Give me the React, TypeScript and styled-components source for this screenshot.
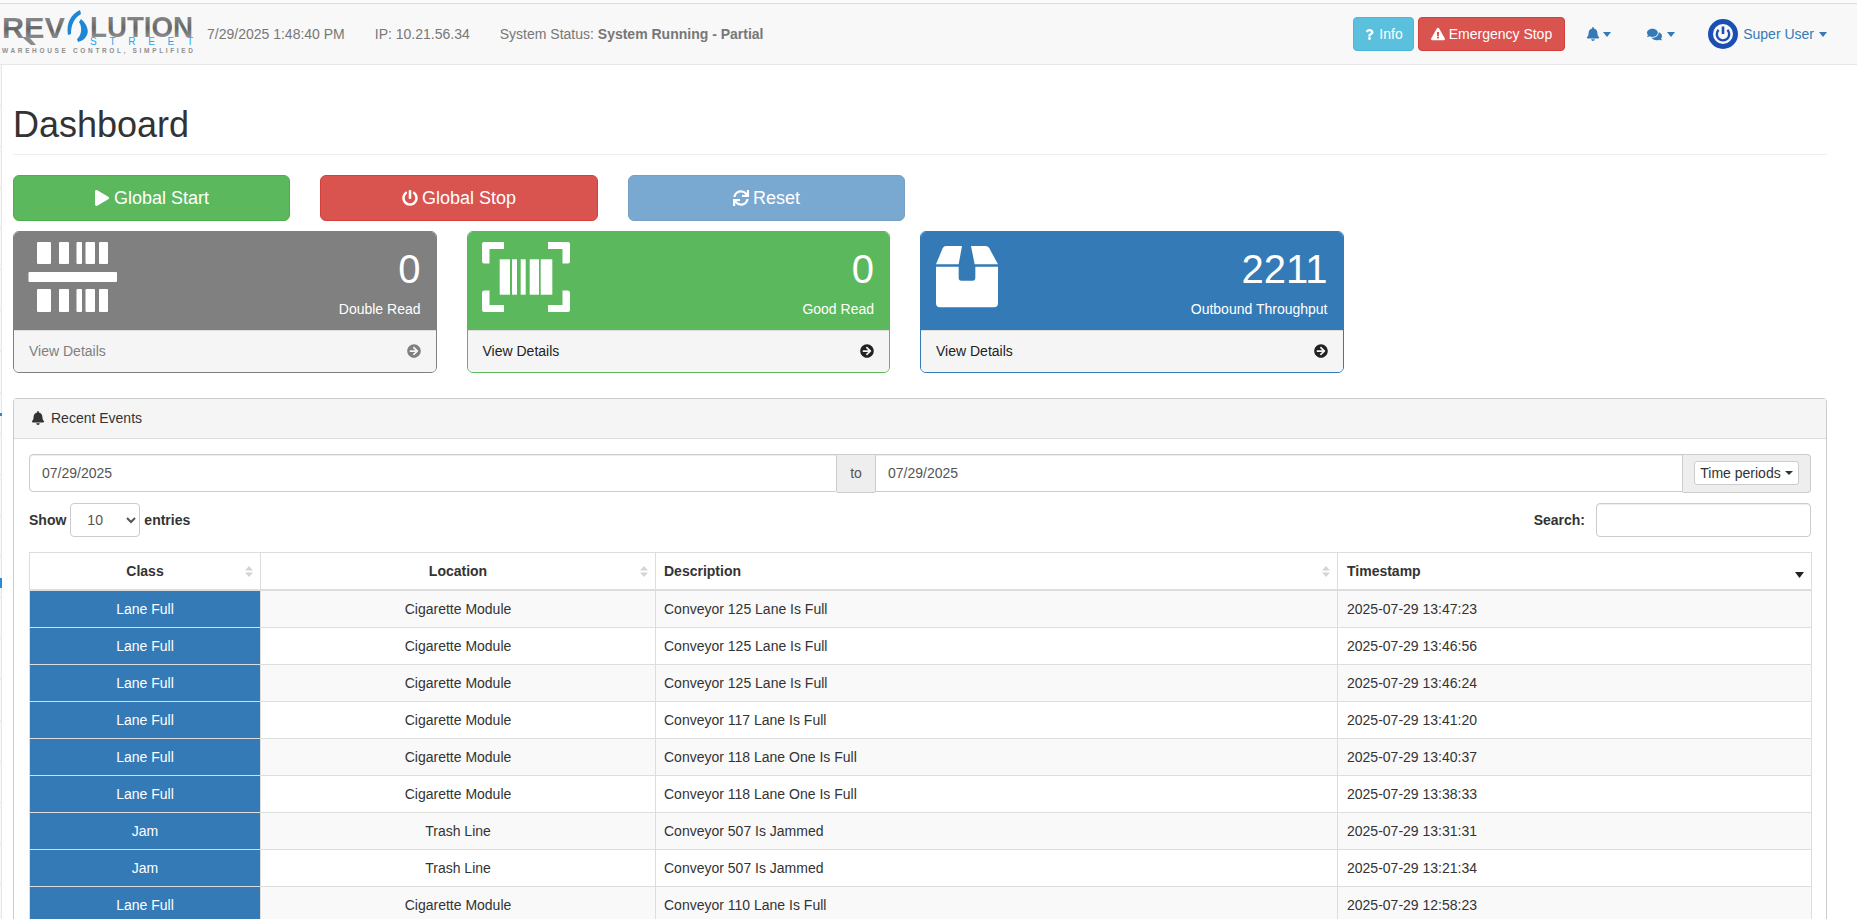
import React from 'react';
import styled, { createGlobalStyle } from 'styled-components';
import {
    FaArrowCircleRight,
    FaBell,
    FaComments,
    FaExclamationTriangle,
    FaPlay,
    FaPowerOff,
    FaQuestion,
    FaSync,
} from 'react-icons/fa';

const GlobalStyle = createGlobalStyle`
    html, body {
        margin: 0;
        padding: 0;
        height: 100%;
        overflow: hidden;
        background: #fff;
    }
    body {
        font-family: "Liberation Sans", Arial, sans-serif;
        font-size: 14px;
        line-height: 20px;
        color: #333;
    }
    * {
        box-sizing: border-box;
    }
`;

const Page = styled.div`
    padding-top: 3px;
    background: #fbfbfb;
`;

const Navbar = styled.nav`
    height: 62px;
    display: flex;
    align-items: center;
    padding-right: 30px;
    background: #f8f8f8;
    border-top: 1px solid #ddd;
    border-bottom: 1px solid #e7e7e7;
    color: #777;
`;

const LogoSvg = styled.svg`
    width: 195px;
    height: 46px;
    margin: 0 12px 4px 0;
    flex-shrink: 0;
    overflow: visible;
`;

const NavText = styled.span`
    margin-right: 30px;
    white-space: nowrap;
`;

const NavRight = styled.div`
    margin-left: auto;
    display: flex;
    align-items: center;
`;

const SmallButton = styled.button<{ $bg: string; $border: string; $pad: number }>`
    height: 34px;
    padding: 0 ${(p) => p.$pad}px;
    margin-right: 4px;
    display: inline-flex;
    align-items: center;
    gap: 4px;
    font: inherit;
    color: #fff;
    background: ${(p) => p.$bg};
    border: 1px solid ${(p) => p.$border};
    border-radius: 4px;
`;

const NavIcon = styled.a<{ $left: number; $gap: number }>`
    display: inline-flex;
    align-items: center;
    gap: ${(p) => p.$gap}px;
    margin-left: ${(p) => p.$left}px;
    color: #337ab7;
`;

const Caret = styled.span`
    display: inline-block;
    width: 0;
    height: 0;
    border-top: 4px solid currentColor;
    border-left: 4px solid transparent;
    border-right: 4px solid transparent;
`;

const NavCaret = styled(Caret)`
    border-top-width: 5px;
    border-left-width: 4.5px;
    border-right-width: 4.5px;
`;

const UserName = styled.span`
    margin: 0 2px;
`;

const Shell = styled.div`
    display: flex;
    background: #fff;
`;

const SideStrip = styled.div`
    position: relative;
    width: 2px;
    height: 860px;
    flex-shrink: 0;
    background: repeating-linear-gradient(#f8f8f8 0 40px, #e7e7e7 40px 41px);
    border-right: 1px solid #e7e7e7;
`;

const SideMark = styled.span<{ $top: number; $h: number }>`
    position: absolute;
    left: 0;
    top: ${(p) => p.$top}px;
    width: 2px;
    height: ${(p) => p.$h}px;
    background: #2a8ad4;
`;

const Main = styled.main`
    flex: 1;
    min-width: 0;
    padding: 40px 30px 0 11px;
`;

const PageHeader = styled.h1`
    margin: 0 0 20px;
    padding-bottom: 9px;
    font-size: 36px;
    line-height: 39.6px;
    font-weight: 400;
    color: #333;
    border-bottom: 1px solid #eee;
`;

const ActionRow = styled.div`
    display: grid;
    grid-template-columns: 277px 278px 277px;
    gap: 30px;
    margin-bottom: 10px;
`;

const ActionButton = styled.button<{ $bg: string; $border: string; $faded?: boolean }>`
    height: 46px;
    display: flex;
    align-items: center;
    justify-content: center;
    gap: 4px;
    font: inherit;
    font-size: 18px;
    color: #fff;
    background: ${(p) => p.$bg};
    border: 1px solid ${(p) => p.$border};
    border-radius: 6px;
    opacity: ${(p) => (p.$faded ? 0.65 : 1)};
`;

const CardRow = styled.div`
    display: grid;
    grid-template-columns: repeat(3, 423.5px);
    gap: 30px;
    margin-bottom: 25px;
`;

const Card = styled.div<{ $color: string }>`
    border: 1px solid ${(p) => p.$color};
    border-radius: 6px;
    overflow: hidden;
`;

const CardHead = styled.div<{ $color: string }>`
    height: 98px;
    padding: 10px 15px;
    display: flex;
    justify-content: space-between;
    background: ${(p) => p.$color};
    color: #fff;
`;

const CardIcon = styled.svg`
    height: 70px;
    overflow: visible;
    fill: #fff;
`;

const CardStats = styled.div`
    text-align: right;
`;

const CardNumber = styled.div`
    margin-top: 5px;
    font-size: 40px;
    line-height: 44px;
`;

const CardLabel = styled.div`
    margin-top: 8px;
`;

const CardFoot = styled.div<{ $color: string }>`
    height: 42px;
    padding: 0 15px;
    display: flex;
    align-items: center;
    justify-content: space-between;
    background: #f5f5f5;
    border-top: 1px solid #ddd;
    color: ${(p) => p.$color};
`;

const Panel = styled.section`
    border: 1px solid #ccc;
    border-bottom: 0;
    border-radius: 4px 4px 0 0;
`;

const PanelHead = styled.div`
    height: 40px;
    padding: 0 15px;
    display: flex;
    align-items: center;
    background: #f5f5f5;
    border-bottom: 1px solid #ddd;
`;

const PanelIcon = styled.span`
    width: 18px;
    margin-right: 4px;
    display: inline-flex;
    justify-content: center;
`;

const PanelBody = styled.div`
    padding: 15px;
`;

const DateRange = styled.div`
    display: flex;
    height: 39px;
`;

const DateInput = styled.input`
    flex: 1;
    min-width: 0;
    height: 38px;
    padding: 0 12px;
    font: inherit;
    color: #555;
    background: #fff;
    border: 1px solid #ccc;
    box-shadow: inset 0 1px 1px rgba(0, 0, 0, 0.075);

    &:first-child {
        border-radius: 4px 0 0 4px;
    }
`;

const Addon = styled.div<{ $w: number; $last?: boolean }>`
    width: ${(p) => p.$w}px;
    flex-shrink: 0;
    display: flex;
    align-items: center;
    justify-content: center;
    color: #555;
    background: #eee;
    border: 1px solid #ccc;
    border-left: 0;
    border-right: ${(p) => (p.$last ? '1px solid #ccc' : '0')};
    border-radius: ${(p) => (p.$last ? '0 4px 4px 0' : '0')};
`;

const PeriodButton = styled.button`
    height: 24px;
    padding: 0 5px;
    display: inline-flex;
    align-items: center;
    gap: 4px;
    font: inherit;
    color: #333;
    background: #fff;
    border: 1px solid #ccc;
    border-radius: 3px;
`;

const TableControls = styled.div`
    display: flex;
    align-items: center;
    justify-content: space-between;
    margin-top: 10px;
    height: 34px;
    font-weight: 700;
`;

const ControlLabel = styled.label`
    display: flex;
    align-items: center;
    gap: 4px;
`;

const LengthSelect = styled.select`
    width: 70px;
    height: 34px;
    padding: 6px 12px;
    font: inherit;
    font-weight: 400;
    color: #555;
    background: #fff;
    border: 1px solid #ccc;
    border-radius: 4px;
`;

const SearchInput = styled.input`
    width: 215px;
    height: 34px;
    margin-left: 7px;
    border: 1px solid #ccc;
    border-radius: 4px;
    box-shadow: inset 0 1px 1px rgba(0, 0, 0, 0.075);
`;

const EventsTable = styled.table`
    width: 100%;
    margin-top: 15px;
    table-layout: fixed;
    border-collapse: collapse;
`;

const HeadCell = styled.th<{ $center?: boolean }>`
    position: relative;
    padding: 8px;
    font-weight: 700;
    text-align: ${(p) => (p.$center ? 'center' : 'left')};
    border: 1px solid #ddd;
    border-bottom-width: 2px;

    &:last-child {
        padding-left: 9px;
    }
`;

const SortIcon = styled.svg`
    position: absolute;
    right: 7px;
    top: 13px;
    width: 8px;
    height: 11px;
    fill: #d4d4d4;
`;

const SortedIcon = styled.svg`
    position: absolute;
    right: 7px;
    top: 19px;
    width: 9px;
    height: 6px;
    fill: #222;
`;

const Row = styled.tr<{ $odd: boolean }>`
    background: ${(p) => (p.$odd ? '#f9f9f9' : '#fff')};
`;

const Cell = styled.td<{ $center?: boolean }>`
    padding: 8px;
    text-align: ${(p) => (p.$center ? 'center' : 'left')};
    border: 1px solid #ddd;

    &:last-child {
        padding-left: 9px;
    }
`;

const ClassCell = styled(Cell)`
    color: #fff;
    background: #337ab7;
`;

const Logo = () => (
    <LogoSvg viewBox="0 0 195 46" role="img" aria-label="Revolution Street">
        <defs>
            <linearGradient id="logoGrey" x1="0" y1="0" x2="0" y2="1">
                <stop offset="0" stopColor="#9a9a9a" />
                <stop offset="0.55" stopColor="#666" />
                <stop offset="1" stopColor="#a8a8a8" />
            </linearGradient>
        </defs>
        <text x="2" y="29" fontFamily="Liberation Sans" fontWeight="700" fontSize="29" textLength="63" lengthAdjust="spacingAndGlyphs" fill="url(#logoGrey)">REV</text>
        <text x="90" y="28" fontFamily="Liberation Sans" fontWeight="700" fontSize="30" textLength="103" lengthAdjust="spacingAndGlyphs" fill="url(#logoGrey)">LUTION</text>
        <polygon points="22,28 29,28 36,36 31,36" fill="#8a8a8a" />
        <path d="M80,1 C71,5 66,14 68,26 L71,25 C71,16 74,9 81,5 Z" fill="#1e86d6" />
        <path d="M81,10 C87,15 89,22 87,26 C85,30 82,32 78,33 L77,30 C81,27 83,19 79,13 Z" fill="#1e86d6" />
        <text x="90" y="36" fontFamily="Liberation Sans" fontSize="10" textLength="103" lengthAdjust="spacing" fill="#2aa4ee">STREET</text>
        <text x="2" y="44" fontFamily="Liberation Sans" fontWeight="700" fontSize="6.5" textLength="191" lengthAdjust="spacing" fill="#8f8f8f">WAREHOUSE CONTROL, SIMPLIFIED</text>
    </LogoSvg>
);

const PowerAvatar = () => (
    <svg width="30" height="30" viewBox="0 0 30 30" fill="none">
        <circle cx="15" cy="15" r="12.5" stroke="#1c4fb4" strokeWidth="5" />
        <path d="M10.6 10.8 A6.2 6.2 0 1 0 19.4 10.8" stroke="#1c4fb4" strokeWidth="2.4" />
        <path d="M15 7.5 V15" stroke="#1c4fb4" strokeWidth="2.6" />
    </svg>
);

const DoubleReadIcon = () => {
    const bars = [[8, 14], [30, 10], [47.5, 5.5], [56.5, 9.5], [70, 9]];
    return (
        <CardIcon width="88" viewBox="0 0 88 70">
            {bars.map(([x, w]) => (
                <rect key={`t${x}`} x={x} y="0" width={w} height="22" rx="1" />
            ))}
            <rect x="-0.5" y="30" width="88.5" height="10" rx="1" />
            {bars.map(([x, w]) => (
                <rect key={`b${x}`} x={x} y="47" width={w} height="23" rx="1" />
            ))}
        </CardIcon>
    );
};

const GoodReadIcon = () => (
    <CardIcon width="88" viewBox="1 0 88 70">
        <path d="M2 0 H22 V7 H7.5 V21.5 H2 Q0 21.5 0 19 V2 Q0 0 2 0 Z" />
        <path d="M86 0 H66 V7 H80.5 V21.5 H86 Q88 21.5 88 19 V2 Q88 0 86 0 Z" />
        <path d="M2 70 H22 V63 H7.5 V48.5 H2 Q0 48.5 0 51 V68 Q0 70 2 70 Z" />
        <path d="M86 70 H66 V63 H80.5 V48.5 H86 Q88 48.5 88 51 V68 Q88 70 86 70 Z" />
        <rect x="17.7" y="17.3" width="10.3" height="35.4" />
        <rect x="30" y="17.3" width="5" height="35.4" />
        <rect x="38.7" y="17.3" width="5" height="35.4" />
        <rect x="47.7" y="17.3" width="9.3" height="35.4" />
        <rect x="58.7" y="17.3" width="11.6" height="35.4" />
    </CardIcon>
);

const PackageIcon = () => (
    <CardIcon width="62" viewBox="32 21 186 210">
        <path d="M32 88 L52 40 Q55 33 63 33 H110 L100 88 Z" />
        <path d="M137 33 H180 Q188 33 192 40 L218 88 H148 Z" />
        <path d="M32 95 H100 V130 Q100 137 107 137 H143 Q150 137 150 130 V95 H218 V205 Q218 217 206 217 H44 Q32 217 32 205 Z" />
    </CardIcon>
);

const SortArrows = () => (
    <SortIcon viewBox="0 0 8 11">
        <path d="M4 0 L8 4.5 H0 Z M4 11 L0 6.5 H8 Z" />
    </SortIcon>
);

const cards = [
    { color: '#808080', linkColor: '#808080', value: '0', label: 'Double Read', icon: <DoubleReadIcon /> },
    { color: '#5cb85c', linkColor: '#222', value: '0', label: 'Good Read', icon: <GoodReadIcon /> },
    { color: '#337ab7', linkColor: '#222', value: '2211', label: 'Outbound Throughput', icon: <PackageIcon /> },
];

const events = [
    ['Lane Full', 'Cigarette Module', 'Conveyor 125 Lane Is Full', '2025-07-29 13:47:23'],
    ['Lane Full', 'Cigarette Module', 'Conveyor 125 Lane Is Full', '2025-07-29 13:46:56'],
    ['Lane Full', 'Cigarette Module', 'Conveyor 125 Lane Is Full', '2025-07-29 13:46:24'],
    ['Lane Full', 'Cigarette Module', 'Conveyor 117 Lane Is Full', '2025-07-29 13:41:20'],
    ['Lane Full', 'Cigarette Module', 'Conveyor 118 Lane One Is Full', '2025-07-29 13:40:37'],
    ['Lane Full', 'Cigarette Module', 'Conveyor 118 Lane One Is Full', '2025-07-29 13:38:33'],
    ['Jam', 'Trash Line', 'Conveyor 507 Is Jammed', '2025-07-29 13:31:31'],
    ['Jam', 'Trash Line', 'Conveyor 507 Is Jammed', '2025-07-29 13:21:34'],
    ['Lane Full', 'Cigarette Module', 'Conveyor 110 Lane Is Full', '2025-07-29 12:58:23'],
];

const App: React.FC = () => {
    return (
        <Page>
            <GlobalStyle />
            <Navbar>
                <Logo />
                <NavText>7/29/2025 1:48:40 PM</NavText>
                <NavText>IP: 10.21.56.34</NavText>
                <NavText>System Status: <b>System Running - Partial</b></NavText>
                <NavRight>
                    <SmallButton $bg="#5bc0de" $border="#46b8da" $pad={10}><FaQuestion size={11} />Info</SmallButton>
                    <SmallButton $bg="#d9534f" $border="#d43f3a" $pad={12}><FaExclamationTriangle size={14} />Emergency Stop</SmallButton>
                    <NavIcon $left={17} $gap={3}><FaBell size={14} /><NavCaret /></NavIcon>
                    <NavIcon $left={36} $gap={5}><FaComments size={15} /><NavCaret /></NavIcon>
                    <NavIcon $left={33} $gap={3}><PowerAvatar /><UserName>Super User</UserName><NavCaret /></NavIcon>
                </NavRight>
            </Navbar>
            <Shell>
                <SideStrip>
                    <SideMark $top={348} $h={3} />
                    <SideMark $top={513} $h={10} />
                </SideStrip>
                <Main>
                    <PageHeader>Dashboard</PageHeader>
                    <ActionRow>
                        <ActionButton $bg="#5cb85c" $border="#4cae4c"><FaPlay size={16} />Global Start</ActionButton>
                        <ActionButton $bg="#d9534f" $border="#d43f3a"><FaPowerOff size={16} />Global Stop</ActionButton>
                        <ActionButton $bg="#337ab7" $border="#2e6da4" $faded><FaSync size={16} />Reset</ActionButton>
                    </ActionRow>
                    <CardRow>
                        {cards.map((card) => (
                            <Card key={card.label} $color={card.color}>
                                <CardHead $color={card.color}>
                                    {card.icon}
                                    <CardStats>
                                        <CardNumber>{card.value}</CardNumber>
                                        <CardLabel>{card.label}</CardLabel>
                                    </CardStats>
                                </CardHead>
                                <CardFoot $color={card.linkColor}>
                                    View Details
                                    <FaArrowCircleRight size={14} />
                                </CardFoot>
                            </Card>
                        ))}
                    </CardRow>
                    <Panel>
                        <PanelHead>
                            <PanelIcon><FaBell size={14} /></PanelIcon>
                            Recent Events
                        </PanelHead>
                        <PanelBody>
                            <DateRange>
                                <DateInput defaultValue="07/29/2025" />
                                <Addon $w={38}>to</Addon>
                                <DateInput defaultValue="07/29/2025" />
                                <Addon $w={128} $last>
                                    <PeriodButton>Time periods <Caret /></PeriodButton>
                                </Addon>
                            </DateRange>
                            <TableControls>
                                <ControlLabel>
                                    Show
                                    <LengthSelect defaultValue="10">
                                        <option value="10">10</option>
                                        <option value="25">25</option>
                                        <option value="50">50</option>
                                    </LengthSelect>
                                    entries
                                </ControlLabel>
                                <ControlLabel>
                                    Search:
                                    <SearchInput />
                                </ControlLabel>
                            </TableControls>
                            <EventsTable>
                                <colgroup>
                                    <col width="231" />
                                    <col width="395" />
                                    <col width="682" />
                                    <col width="474" />
                                </colgroup>
                                <thead>
                                    <tr>
                                        <HeadCell $center>Class<SortArrows /></HeadCell>
                                        <HeadCell $center>Location<SortArrows /></HeadCell>
                                        <HeadCell>Description<SortArrows /></HeadCell>
                                        <HeadCell>
                                            Timestamp
                                            <SortedIcon viewBox="0 0 9 6"><path d="M0 0 H9 L4.5 6 Z" /></SortedIcon>
                                        </HeadCell>
                                    </tr>
                                </thead>
                                <tbody>
                                    {events.map((event, index) => (
                                        <Row key={event[3]} $odd={index % 2 === 0}>
                                            <ClassCell $center>{event[0]}</ClassCell>
                                            <Cell $center>{event[1]}</Cell>
                                            <Cell>{event[2]}</Cell>
                                            <Cell>{event[3]}</Cell>
                                        </Row>
                                    ))}
                                </tbody>
                            </EventsTable>
                        </PanelBody>
                    </Panel>
                </Main>
            </Shell>
        </Page>
    );
};

export default App;
